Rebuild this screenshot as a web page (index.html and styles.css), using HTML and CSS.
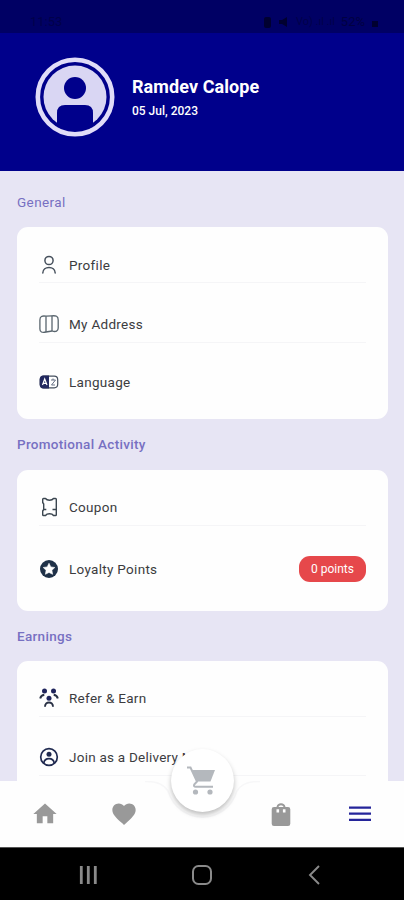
FILE: index.html
```html
<!DOCTYPE html>
<html lang="en">
<head>
<meta charset="utf-8">
<title>Menu</title>
<link rel="stylesheet" href="styles.css">
</head>
<body>
<div class="phone">
  <div class="status">
    <span class="clock">11:53</span>
    <span class="signals">
      <svg width="9" height="12" viewBox="0 0 9 12"><rect x="1" y="1" width="7" height="11" rx="2"/></svg>
      <svg width="12" height="12" viewBox="0 0 12 12"><path d="M1 4h3l5-3v10L4 8H1z"/></svg>
      <span class="faint">Vo) .ıl .ıl</span>
      <span class="percent">52%</span>
      <svg width="8" height="12" viewBox="0 0 8 12"><path d="M1 5h6v6H1z"/></svg>
    </span>
  </div>
  <header class="hero">
    <svg class="avatar" viewBox="0 0 80 80">
      <circle cx="40" cy="40" r="37.2" fill="none" stroke="#e0dcf8" stroke-width="4.6"/>
      <circle cx="40" cy="40" r="31.5" fill="#d9d6f3"/>
      <circle cx="40" cy="31" r="11" fill="#00008b"/>
      <path d="M22 70V56q0-8 8-8h20q8 0 8 8v14q-18 5-36 0z" fill="#00008b"/>
    </svg>
    <div class="who">
      <div class="name">Ramdev Calope</div>
      <div class="date">05 Jul, 2023</div>
    </div>
  </header>
  <main class="content">
    <h2 class="title">General</h2>
    <section class="card general">
      <div class="row"><svg class="icon" viewBox="0 0 20 20"><g fill="none" stroke="#46505c" stroke-width="1.500" stroke-linecap="round"><circle cx="10" cy="5.500" r="4.100"/><path d="M3.800 18c0-7.500 12.400-7.500 12.400 0"/></g></svg><span>Profile</span></div>
      <div class="row"><svg class="icon" viewBox="0 0 20 20"><g fill="none" stroke="#59656e" stroke-width="1.300"><path d="M7 2.200C3 1.500.9 2.500.9 6v9c0 3 2 4 6.100 3L13 17c4 1.300 6.200 0 6.200-3V6c0-4-2.200-4.500-6.200-4.200L7 2.200z"/><path d="M7 2.200V18M13 1.800V17"/></g></svg><span>My Address</span></div>
      <div class="row"><svg class="icon" viewBox="0 0 20 20"><rect x="1.200" y="4.200" width="17.500" height="11.600" rx="3.500" fill="#fff" stroke="#46505f" stroke-width="1.200"/><path d="M10 3.600H4.500Q.7 3.600.7 7.500v5q0 3.900 3.800 3.900H10z" fill="#22295f"/><path d="M3.500 13L5.700 7 8 13M4.300 11.300h2.900" fill="none" stroke="#fff" stroke-width="1.200"/><path d="M12 8h4.500l-4 5h3.500M14 6.500V8" fill="none" stroke="#667085" stroke-width="1"/></svg><span>Language</span></div>
    </section>
    <h2 class="title">Promotional Activity</h2>
    <section class="card promo">
      <div class="row"><svg class="icon" viewBox="0 0 20 20"><path d="M4.500 1.500h2c1.500 2.300 6.500 2.300 8 0h2q.8 0 .8.800V17.700q0 .8-.8.800h-2c-1.500-2.300-6.500-2.300-8 0h-2q-.8 0-.8-.8V14l1-1.500V7l-1-1.500V2.300q0-.8.800-.8zM5 12.500h2.300M13.500 12.500H17" fill="none" stroke="#3b4650" stroke-width="1.400" stroke-linejoin="round"/></svg><span>Coupon</span></div>
      <div class="row"><svg class="icon" viewBox="0 0 20 20"><circle cx="10" cy="10" r="9" fill="#1f3148"/><path d="M10 4.300l1.800 3.600 4 .6-2.900 2.800.7 4-3.600-1.900-3.600 1.900.7-4-2.900-2.800 4-.6z" fill="#fff" stroke="#fff" stroke-width=".6" stroke-linejoin="round"/></svg><span>Loyalty Points</span><span class="badge">0 points</span></div>
    </section>
    <h2 class="title">Earnings</h2>
    <section class="card earn">
      <div class="row"><svg class="icon" viewBox="0 0 20 20"><g fill="#20255c"><circle cx="5.500" cy="3" r="2.500"/><circle cx="14.500" cy="3" r="2.500"/><circle cx="10" cy="10.200" r="2.500"/></g><path d="M1.200 10.500Q1.800 7.500 5.300 6.800M18.800 10.500Q18.200 7.500 14.700 6.800M6 18.800c0-5.800 8-5.800 8 0" fill="none" stroke="#283044" stroke-width="1.900"/></svg><span>Refer &amp; Earn</span></div>
      <div class="row"><svg class="icon" viewBox="0 0 20 20"><circle cx="10" cy="10" r="8.300" fill="none" stroke="#202a50" stroke-width="1.700"/><circle cx="10" cy="7.300" r="2.500" fill="#202a50"/><path d="M4.800 16c1-5.800 9.400-5.800 10.400 0" fill="none" stroke="#202a50" stroke-width="1.700"/></svg><span>Join as a Delivery Man</span></div>
    </section>
  </main>
  <nav class="tabs">
    <svg class="notch" width="404" height="66" viewBox="0 0 404 66"><path d="M145 .5Q162 0 168 10C179 45 226 45 237 10Q243 0 260 .5" fill="none" stroke="#f7f7f8" stroke-width="1.500"/></svg>
    <a class="tab"><svg width="28" height="28" viewBox="0 0 24 24"><path d="M10 20v-6h4v6h5v-8h3L12 3 2 12h3v8z"/></svg></a>
    <a class="tab"><svg width="28" height="28" viewBox="0 0 24 24"><path d="M12 21.350l-1.450-1.320C5.400 15.360 2 12.280 2 8.500 2 5.420 4.420 3 7.500 3c1.740 0 3.410.81 4.500 2.090C13.090 3.810 14.760 3 16.500 3 19.580 3 22 5.420 22 8.500c0 3.780-3.400 6.860-8.550 11.540z"/></svg></a>
    <a class="tab gap"></a>
    <a class="tab"><svg width="26" height="28" viewBox="0 0 26 28"><path fill-rule="evenodd" d="M6 7h2.500a4.600 4.600 0 0 1 9 0H20q2.300 0 2.300 2.300v14.400q0 2.300-2.300 2.300H6q-2.300 0-2.300-2.300V9.300Q3.700 7 6 7zM10.300 7h5.400a2.900 2.900 0 0 0-5.400 0zM8.500 9.300v3.200h2.600v-3.200zM14.900 9.300v3.200h2.600v-3.200z"/></svg></a>
    <a class="tab active"><svg width="24" height="18" viewBox="0 0 24 18"><path d="M1 1.500h22v2.300H1zM1 7.500h22v2.300H1zM1 13.700h22v2.300H1z"/></svg></a>
    <div class="fab"><svg width="30" height="30" viewBox="0 0 30 30"><path d="M6 4h23l-4.500 11.500H10.500z"/><path d="M1 1.500h3.500L11 15.500l-2.800 3q-.8 2.300 1.500 2.300H27" fill="none" stroke="#b4b8bd" stroke-width="2"/><circle cx="9.500" cy="26" r="2.600"/><circle cx="24" cy="26" r="2.600"/></svg></div>
  </nav>
  <div class="system">
    <svg width="22" height="22" viewBox="0 0 22 22"><path d="M4.300 2v18M11.300 2v18M18.300 2v18" stroke-width="2.800"/></svg>
    <svg width="22" height="22" viewBox="0 0 22 22"><rect x="2" y="2" width="18" height="18" rx="5.500" stroke-width="2"/></svg>
    <svg width="22" height="22" viewBox="0 0 22 22"><path d="M15 2L6 11l9 9" stroke-width="1.900"/></svg>
  </div>
</div>
</body>
</html>
```
FILE: styles.css
```css
* { box-sizing: border-box; }
body { margin: 0; font-family: Roboto, "Liberation Sans", sans-serif; }
svg { display: block; flex: none; }
.phone { width: 404px; height: 900px; display: flex; flex-direction: column; overflow: hidden; background: #e7e5f4; }
.status { height: 33px; flex: none; background: #000064; color: #00003f; display: flex; justify-content: space-between; align-items: flex-start; padding: 15px 25px 0 30px; font-size: 13px; line-height: 14px; }
.clock { color: #00004a; }
.signals { display: flex; align-items: center; gap: 6px; fill: #000030; }
.faint { font-size: 11px; color: #00004a; white-space: nowrap; }
.percent { color: #000042; }
.hero { height: 138px; flex: none; background: #00008b; display: flex; padding: 24px 35px; }
.avatar { width: 80px; height: 80px; }
.who { margin-left: 17px; padding-top: 19px; color: #fff; }
.name { font-size: 18px; line-height: 22px; font-weight: 700; letter-spacing: .08px; white-space: nowrap; }
.date { font-size: 12px; line-height: 16px; margin-top: 5px; font-weight: 500; }
.content { height: 610px; flex: none; overflow: hidden; padding: 0 16px 0 17px; }
.title { margin: 0; font-size: 13.5px; font-weight: 500; letter-spacing: .3px; color: #7770c2; height: 51px; padding-top: 16px; line-height: 18px; }
.title:first-child { height: 56px; padding-top: 22px; font-weight: 400; letter-spacing: .4px; }
.title:nth-of-type(3) { height: 50px; }
.card { background: #fefefe; border-radius: 11px; padding: 20px 22px 0; }
.general { height: 192px; }
.promo { height: 141px; }
.earn { height: 192px; }
.row { display: flex; align-items: center; height: 36px; border-bottom: 1px solid #f5f5f7; font-size: 13.5px; letter-spacing: .3px; color: #3c3c3f; white-space: nowrap; }
.row + .row { height: 60px; padding-top: 22px; }
.general .row:last-child { height: 58px; padding-top: 20px; border: 0; }
.promo .row:last-child { height: 61px; padding-top: 25px; border: 0; }
.promo .row:first-child { padding-bottom: 2px; }
.earn .row:first-child { padding-bottom: 2px; }
.earn .row:last-child { height: 59px; padding-top: 21px; letter-spacing: .24px; }
.icon { width: 20px; height: 20px; margin-right: 10px; }
.badge { margin-left: auto; width: 67px; height: 26px; border-radius: 11px; background: #e6484b; color: #fff; font-size: 12px; letter-spacing: 0; line-height: 26px; text-align: center; }
.tabs { height: 66px; flex: none; position: relative; display: flex; align-items: center; padding: 0 5px; background: #fefefe; }
.notch { position: absolute; left: 0; top: 0; }
.tab { flex: 1 1 0; min-width: 0; display: flex; justify-content: center; fill: #999; }
.tab:first-of-type { padding-left: 1px; }
.tab.active { fill: #25259a; }
.fab { position: absolute; left: 171px; top: -32px; width: 63px; height: 63px; border-radius: 50%; background: #fff; display: flex; align-items: center; justify-content: center; padding-right: 3px; fill: #b4b8bd; box-shadow: 0 3px 5px rgba(0, 0, 0, .25); }
.system { flex: 1; background: #000; border-top: 1px solid #555; display: flex; justify-content: space-between; align-items: center; padding: 4px 78px 2px 77px; fill: none; stroke: #8a8a8a; }
```
